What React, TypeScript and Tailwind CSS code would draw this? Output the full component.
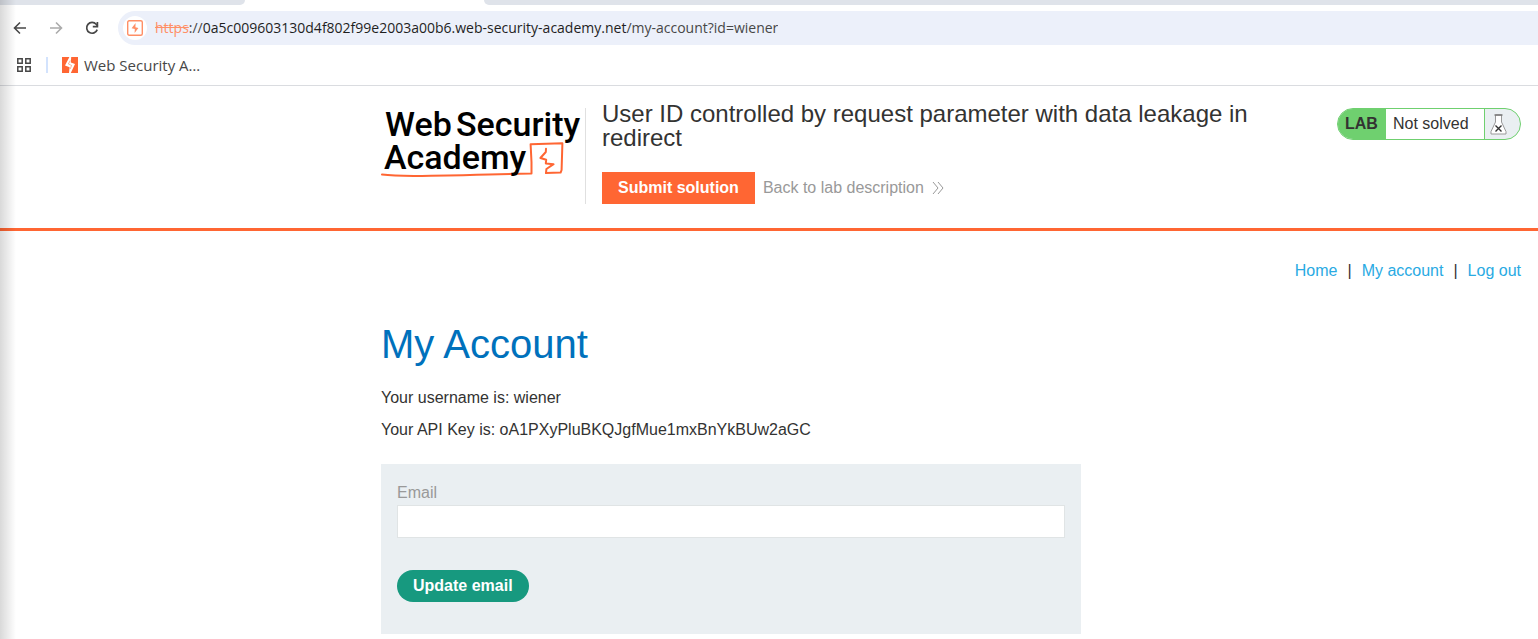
import React from "react";

const BackIcon = () => (
  <svg width="14" height="14" viewBox="0 0 14 14" fill="none" stroke="currentColor" strokeWidth="1.6">
    <path d="M13 7H1.800M7 1.500 1.500 7 7 12.500" />
  </svg>
);

const ForwardIcon = () => (
  <svg width="14" height="14" viewBox="0 0 14 14" fill="none" stroke="currentColor" strokeWidth="1.6">
    <path d="M1 7h11.200M7 1.500 12.500 7 7 12.500" />
  </svg>
);

const ReloadIcon = () => (
  <svg width="14" height="14" viewBox="0 0 14 14" fill="none" stroke="currentColor" strokeWidth="1.7">
    <path d="M12.2 8.6A5.4 5.4 0 1 1 11.2 3.3L12.6 5" />
    <path d="M12.4 1v4.6H7.8" />
  </svg>
);

const AppsIcon = () => (
  <svg width="14" height="14" viewBox="0 0 14 14" fill="none" stroke="currentColor" strokeWidth="1.5">
    <path d="M.8.8h4.4v4.4H.8zM8.8.8h4.4v4.4H8.8zM.8 8.8h4.4v4.4H.8zM8.8 8.8h4.4v4.4H8.8z" />
  </svg>
);

const SiteIcon = () => (
  <svg width="16" height="16" viewBox="0 0 16 16" fill="none" stroke="#ff8f66" strokeWidth="1.4">
    <rect x=".7" y=".7" width="14.6" height="14.6" rx="1.5" />
    <path d="M8.600 3 4.600 8.200 7.800 8.900 7.600 13 11.400 8 8.400 7.200z" fill="#ff8f66" stroke="none" />
  </svg>
);

const BookmarkIcon = () => (
  <svg width="16" height="16" viewBox="0 0 16 16">
    <path fill="#ff6633" d="M0 0h16v16H0z" />
    <path fill="#fff" d="M7.400 0H9.200L8.800 5.600 13 7 8.800 16H7L7.600 10.200 3 8.400z" />
    <path fill="none" stroke="#ff6633" strokeWidth=".5" d="M8.200 3.500 6.400 7 9.600 8.400 8.200 12" />
  </svg>
);

const Logo = () => (
  <svg width="204" height="76" viewBox="0 0 204 76" role="img" aria-label="Web Security Academy" className="overflow-visible">
    <g fill="none" stroke="#ff6633" strokeLinejoin="round" strokeLinecap="round">
      <path strokeWidth="2" d="M1 66.600Q15 68.500 50 67.800T108 66.400L150.500 65.500V54L149.600 36.200 181.400 35.200 180.600 62 179.600 64.600 165 65" />
      <path strokeWidth="2" d="M165 65 165.400 61 172.600 56.200 164.800 55.400 165.200 51.800 159.400 50 164.800 44 165 40.800" />
    </g>
    <g className="font-['Roboto',sans-serif] text-[34px] font-medium" fill="#000">
      <text x="4" y="28">Web</text>
      <text x="75" y="28">Security</text>
      <text x="3" y="61">Academy</text>
    </g>
  </svg>
);

const FlaskIcon = () => (
  <svg width="17" height="21" viewBox="0 0 17 21" fill="none">
    <path d="M5.500 1v7L1 17.600V20h15v-2.400L11.500 8V1z" fill="#fff" stroke="#999" />
    <path d="M4.500 1h8" stroke="#777" strokeWidth="1.400" />
    <path d="m5.500 11.500 6 6M11.500 11.500l-6 6" stroke="#333" strokeWidth="1.400" />
  </svg>
);

const BrowserBar = () => (
  <div className="border-b border-[#dadce0] bg-white font-['Open_Sans',sans-serif]">
    <div className="grid grid-cols-[245px_239px_1fr] bg-white">
      <div className="h-[5px] rounded-br-[6px] bg-[#dfe3ea]" />
      <div />
      <div className="h-[5px] rounded-bl-[6px] bg-[#dfe3ea]" />
    </div>
    <div className="flex items-center pt-[6px]">
      <div className="flex w-[118px] items-center gap-[22px] pl-[13px] text-[#474747]">
        <button type="button" aria-label="Back"><BackIcon /></button>
        <button type="button" aria-label="Forward" className="text-[#ababab]"><ForwardIcon /></button>
        <button type="button" aria-label="Reload"><ReloadIcon /></button>
      </div>
      <div className="flex h-[34px] min-w-0 flex-1 items-center gap-2 rounded-l-full bg-[#ecf0fa] pl-[5px]">
        <span className="grid size-6 shrink-0 place-items-center rounded-full bg-white"><SiteIcon /></span>
        <span className="truncate text-[14px] text-[#474747]">
          <span className="text-[#ff8f66] line-through">https</span>
          ://<span className="text-[#1f1f1f]">0a5c009603130d4f802f99e2003a00b6.web-security-academy.net</span>/my-account?id=wiener
        </span>
      </div>
    </div>
    <div className="flex h-10 items-center pl-[17px] text-[#474747]">
      <button type="button" aria-label="Apps"><AppsIcon /></button>
      <span className="mr-[14px] ml-[15px] h-4 w-[2px] bg-[#d3e3fd]" />
      <a href="#academy" className="flex items-center gap-[6px] text-[15px]">
        <BookmarkIcon />
        Web Security A…
      </a>
    </div>
  </div>
);

const LabHeader = () => (
  <header className="border-b-[3px] border-[#ff6633] pr-[17px]">
    <div className="ml-auto flex max-w-[1140px] items-start pt-[22px] pb-6">
      <div className="h-24 w-[205px] shrink-0 border-r border-[#e0e0e0]">
        <Logo />
      </div>
      <div className="-mt-[6px] min-w-0 flex-1 pl-4">
        <h2 className="max-w-[700px] text-[24px] leading-6">
          User ID controlled by request parameter with data leakage in redirect
        </h2>
        <div className="mt-[22px] flex items-center gap-2">
          <button type="button" className="h-8 bg-[#ff6633] px-4 font-bold text-white">Submit solution</button>
          <a href="#lab" className="flex items-center gap-2 text-[#999]">
            Back to lab description
            <svg width="12" height="14" viewBox="0 0 12 14" fill="none" stroke="#999">
              <path d="m1 1 5 6-5 6M6 1l5 6-5 6" />
            </svg>
          </a>
        </div>
      </div>
      <div className="flex h-8 w-[184px] shrink-0 overflow-hidden rounded-full border border-[#6fd06f] bg-[#eaeff2]">
        <span className="flex w-12 items-center bg-[#6fd06f] pl-[7px] font-bold">LAB</span>
        <p className="flex flex-1 items-center border-r border-[#6fd06f] bg-white pl-[7px]">Not solved</p>
        <span className="flex w-[35px] items-center pl-[5px]"><FlaskIcon /></span>
      </div>
    </div>
  </header>
);

const AccountPage = () => (
  <main className="pr-[17px]">
    <div className="ml-auto max-w-[1140px] pt-[30px]">
      <nav className="flex justify-end gap-[10px] leading-5">
        <a href="#home" className="text-[#29aae3]">Home</a>
        <span>|</span>
        <a href="#account" className="text-[#29aae3]">My account</a>
        <span>|</span>
        <a href="#logout" className="text-[#29aae3]">Log out</a>
      </nav>
      <h1 className="mt-[39px] text-[40px] leading-[48px] text-[#0071bc]">My Account</h1>
      <div className="mt-[14px] leading-8">
        <p>Your username is: wiener</p>
        <p>Your API Key is: oA1PXyPluBKQJgfMue1mxBnYkBUw2aGC</p>
      </div>
      <form className="mt-[18px] max-w-[700px] bg-[#eaeff2] px-4 pt-[17px] pb-8">
        <label htmlFor="email" className="block text-[#999]">Email</label>
        <input id="email" type="email" className="block h-[33px] w-full border border-[#e0e4e5] bg-white px-2 outline-none" />
        <button type="button" className="mt-8 h-8 rounded-full bg-[#17997f] px-4 font-bold text-white">Update email</button>
      </form>
    </div>
  </main>
);

export default function App() {
  return (
    <div className="relative min-h-screen bg-white font-['Liberation_Sans',sans-serif] text-[16px] leading-6 text-[#333332]">
      <BrowserBar />
      <LabHeader />
      <AccountPage />
      <div className="pointer-events-none absolute inset-y-0 left-0 w-4 bg-linear-to-r from-black/15 to-transparent" />
    </div>
  );
}
